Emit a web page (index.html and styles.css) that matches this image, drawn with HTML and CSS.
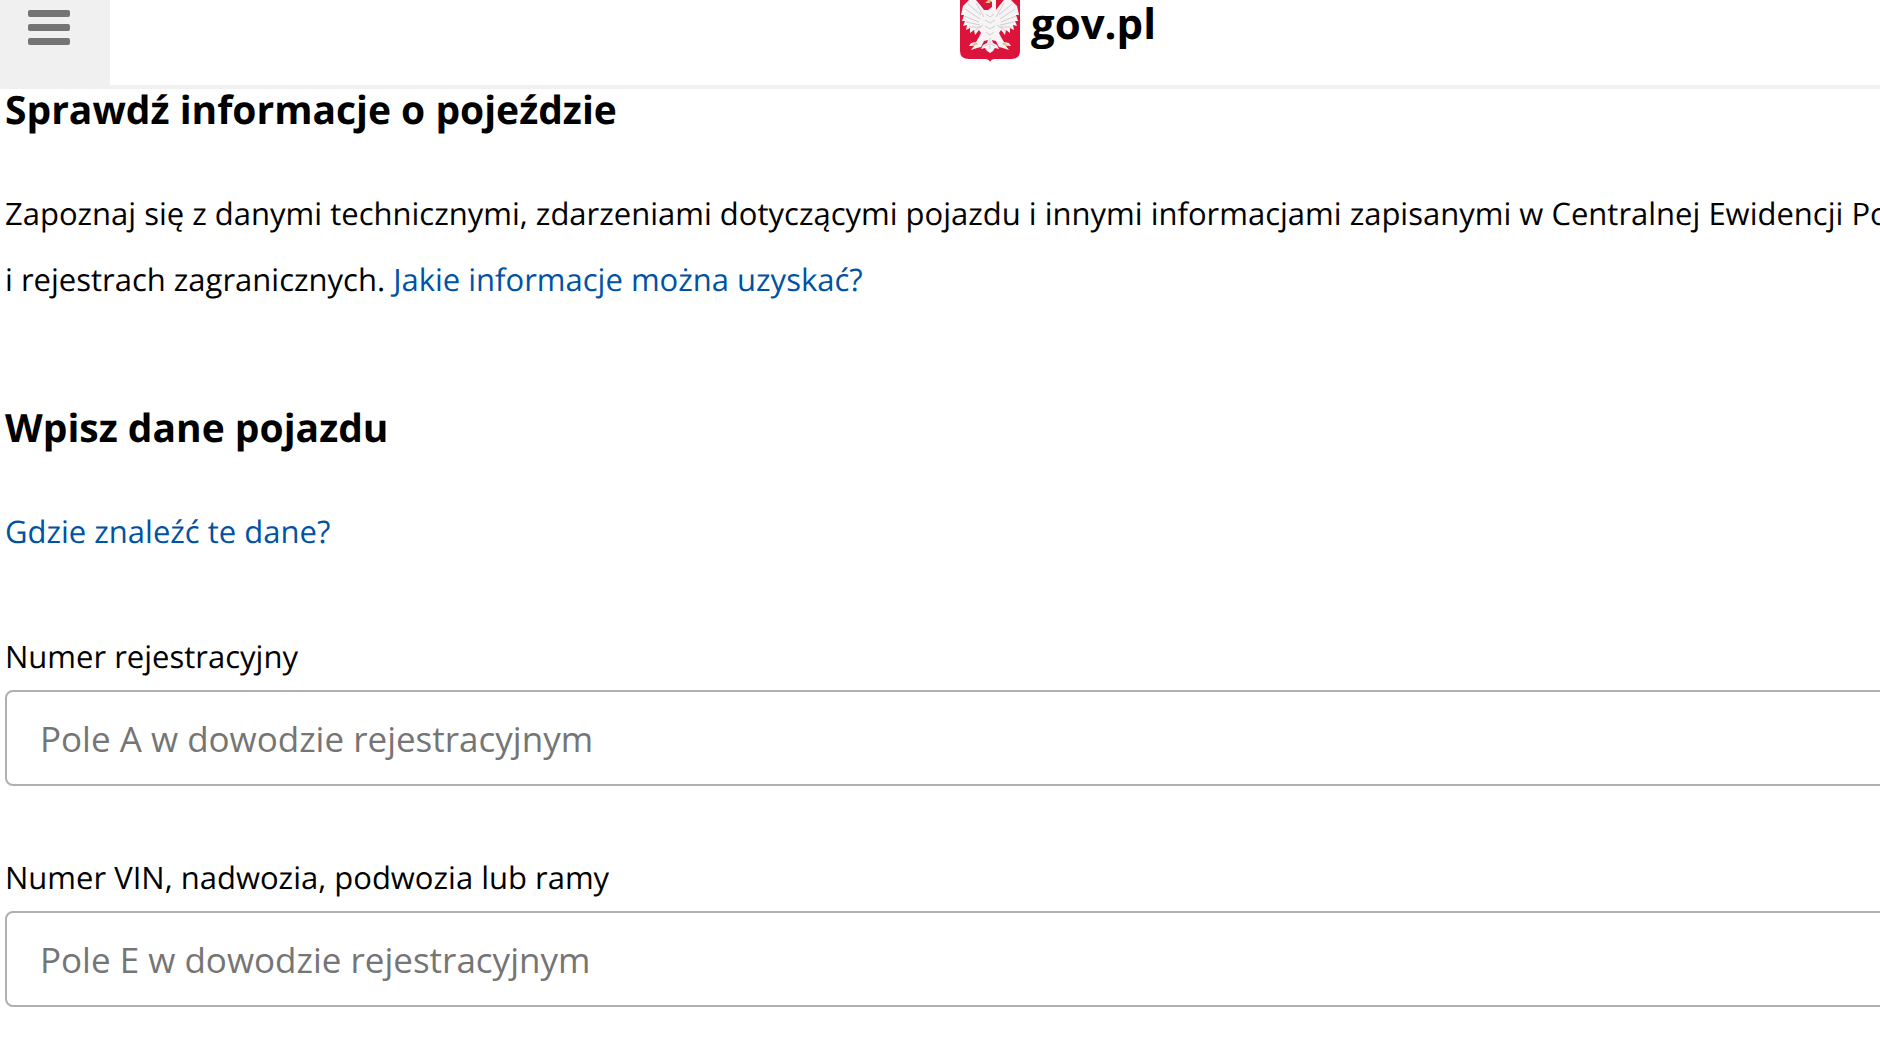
FILE: index.html
```html
<!DOCTYPE html>
<html lang="pl">

<head>
    <meta charset="UTF-8">
    <meta name="viewport" content="width=device-width, initial-scale=1.0">
    <title>Historia pojazdu - gov.pl</title>
    <link rel="stylesheet" href="styles.css">
</head>

<body>

    <div class="page">
        <header class="site-header">
            <button type="button" class="menu-btn" aria-label="Menu">
                <span class="bar"></span>
                <span class="bar"></span>
                <span class="bar"></span>
            </button>
            <a class="logo" href="#">
                <svg class="emblem" viewBox="0 0 62 62" aria-hidden="true">
                    <path fill="#dc143c" d="M1 0h60v51q0 8-9 8H36q-4 0-5 3q-1-3-5-3H10q-9 0-9-8z" />
                    <path class="eagle" d="M30 0L33 2L33 7L29 10L25 10L22 6L17 0L10 0L4 6L2 15L5 15L3 21L6 21L4 26L8 25L7 30L11 28L11 33L15 30L16 35L20 30L22 33L20 37L17 42L12 43L10 46L15 46L12 50L18 48L22 47L25 41L29 40L28 43L24 45L22 49L26 48L28 51L31 53L34 51L36 48L40 49L38 45L34 43L33 40L37 41L40 47L44 48L50 50L47 46L52 46L50 43L45 42L42 37L40 33L42 30L46 35L47 30L51 33L51 28L55 30L54 25L58 26L56 21L59 21L57 15L60 15L58 6L52 0L45 0L40 6L37 10L37 0z" />
                    <g class="feathers">
                        <path d="M9 4L22 15M6 9L21 19M5 16L20 22M7 22L21 25M10 27L22 27M15 31L24 25M17 3L25 17" />
                        <path d="M53 4L40 15M56 9L41 19M57 16L42 22M55 22L41 25M52 27L40 27M47 31L38 25M45 3L37 17" />
                        <path d="M27 14l4 3l4-3M26 20l5 3l5-3M26 26l5 3l5-3M27 32l4 3l4-3M31 38v11M26 46l4-2M36 46l-4-2" />
                    </g>
                    <path class="gold" d="M26 3l3-3h3l-1 3zM12 46l5-4l2 2l-4 2zM50 46l-5-4l-2 2l4 2z" />
                </svg>
                <span>gov.pl</span>
            </a>
        </header>

        <main>
            <h1>Sprawdź informacje o pojeździe</h1>
            <p>Zapoznaj się z danymi technicznymi, zdarzeniami dotyczącymi pojazdu i innymi informacjami zapisanymi w Centralnej Ewidencji Pojazdów i&nbsp;rejestrach&nbsp;zagranicznych. <a href="#">Jakie informacje można uzyskać?</a></p>

            <h2>Wpisz dane pojazdu</h2>
            <p><a href="#">Gdzie znaleźć te dane?</a></p>

            <form>
                <div class="field">
                    <label for="plate">Numer rejestracyjny</label>
                    <input type="text" id="plate" placeholder="Pole A w dowodzie rejestracyjnym">
                </div>
                <div class="field">
                    <label for="vin">Numer VIN, nadwozia, podwozia lub ramy</label>
                    <input type="text" id="vin" placeholder="Pole E w dowodzie rejestracyjnym">
                </div>
            </form>
        </main>
    </div>

</body>

</html>
```

FILE: styles.css
```css
* {
    box-sizing: border-box;
}

body {
    margin: 0;
    overflow: hidden;
    background: #fff;
    color: #000;
    font-family: "Open Sans", sans-serif;
    font-size: 31px;
    line-height: 66px;
    text-rendering: geometricPrecision;
}

/* content is wider than the window and runs off to the right */
.page {
    width: 112.5vw;
}

a {
    color: #0052a5;
    text-decoration: none;
}

.site-header {
    display: grid;
    grid-template-columns: 110px 1fr 110px;
    border-bottom: 4px solid #f0f0f0;
}

.menu-btn {
    display: flex;
    flex-direction: column;
    gap: 7px;
    height: 85px;
    padding: 10px 28px;
    border: 0;
    background: #f0f0f0;
}

.bar {
    width: 42px;
    height: 7px;
    border-radius: 2px;
    background: #747474;
}

.logo {
    display: flex;
    justify-content: center;
    gap: 10px;
    color: #000;
    font-size: 42px;
    font-weight: 700;
    line-height: 48px;
}

.emblem {
    width: 62px;
    height: 62px;
}

.eagle {
    fill: #f7f4f6;
}

.feathers {
    fill: none;
    stroke: #d3ccd3;
    stroke-width: 1;
}

.gold {
    fill: #e8bd83;
}

main {
    padding: 0 5px;
}

h1,
h2 {
    margin: 0;
    font-size: 39px;
    font-weight: 700;
    line-height: 42px;
}

h2 {
    margin-top: 94px;
}

p {
    margin: 50px 0 0;
}

form {
    margin-top: 66px;
}

.field {
    display: flex;
    flex-direction: column;
    gap: 6px;
    margin-bottom: 66px;
}

label {
    line-height: 53px;
}

input {
    width: 100%;
    height: 96px;
    padding: 0 33px;
    border: 2px solid #b0b0b0;
    border-radius: 8px;
    background: #fff;
    font-family: inherit;
    font-size: 35px;
}

input::placeholder {
    color: #757575;
}
```
